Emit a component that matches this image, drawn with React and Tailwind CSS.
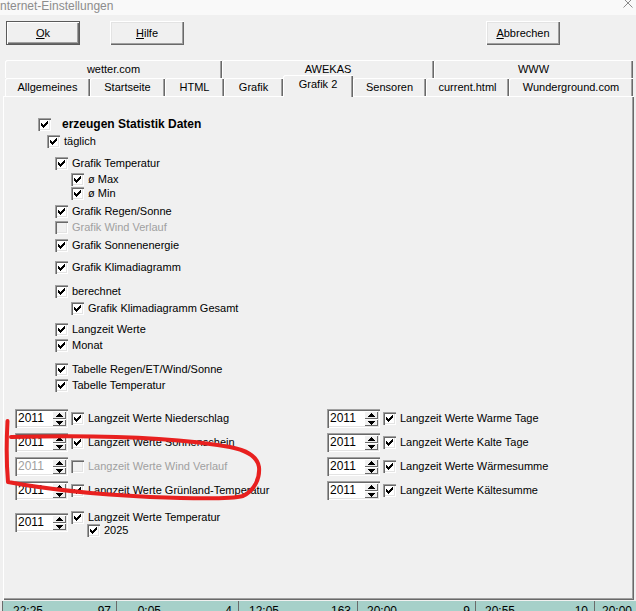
import React from "react";

const SUNKEN =
  "shadow-[inset_1px_1px_0_#a0a0a0,inset_2px_2px_0_#696969,inset_-1px_-1px_0_#ffffff,inset_-2px_-2px_0_#e3e3e3]";

function Check({ checked = true, disabled = false }) {
  return (
    <span
      className={
        "relative block w-[13px] h-[13px] shrink-0 shadow-[inset_1px_1px_0_#a0a0a0,inset_2px_2px_0_#696969,inset_-1px_-1px_0_#ffffff,inset_-2px_-2px_0_#e3e3e3] " +
        (disabled ? "bg-[#f0f0f0]" : "bg-white")
      }
    >
      {checked && (
        <svg
          className="absolute left-[3px] top-[3px]"
          width="7"
          height="7"
          viewBox="0 0 7 7"
          shapeRendering="crispEdges"
        >
          <path
            fill="#000"
            d="M6 0h1v1h-1z M5 1h2v1h-2z M0 2h1v1h-1z M4 2h3v1h-3z M0 3h2v1h-2z M3 3h3v1h-3z M0 4h5v1h-5z M1 5h3v1h-3z M2 6h1v1h-1z"
          />
        </svg>
      )}
    </span>
  );
}

function Row({ ml, mt, children, disabled = false, checked = true, bold = false }) {
  return (
    <div className={"flex items-center h-[13px] " + ml + " " + mt}>
      <Check checked={checked} disabled={disabled} />
      <span
        className={
          "whitespace-nowrap leading-[13px] " +
          (bold ? "ml-[11px] font-bold text-[12px]" : "ml-[4px]") +
          (disabled ? " text-[#a0a0a0]" : " text-black")
        }
      >
        {children}
      </span>
    </div>
  );
}

function Arrow({ up }) {
  return (
    <svg width="7" height="4" viewBox="0 0 7 4" shapeRendering="crispEdges">
      {up ? (
        <path fill="#000" d="M3 0h1v1h-1z M2 1h3v1h-3z M1 2h5v1h-5z M0 3h7v1h-7z" />
      ) : (
        <path fill="#000" d="M0 0h7v1h-7z M1 1h5v1h-5z M2 2h3v1h-3z M3 3h1v1h-1z" />
      )}
    </svg>
  );
}

function Spin({ disabled = false }) {
  return (
    <div className={"w-[53px] h-[19px] shrink-0 flex bg-white p-[2px] " + SUNKEN}>
      <span
        className={
          "flex-1 leading-[15px] pl-[1px] text-[12px] " +
          (disabled ? "text-[#a0a0a0]" : "text-black")
        }
      >
        2011
      </span>
      <div className="w-[14px] h-[15px] flex flex-col">
        <div className="h-[8px] flex items-center justify-center bg-[#f0f0f0] shadow-[inset_1px_1px_0_#ffffff,inset_-1px_-1px_0_#696969]">
          <Arrow up />
        </div>
        <div className="h-[7px] flex items-center justify-center bg-[#f0f0f0] shadow-[inset_1px_1px_0_#ffffff,inset_-1px_-1px_0_#696969]">
          <Arrow />
        </div>
      </div>
    </div>
  );
}

function SpinRow({ children, disabled = false }) {
  return (
    <div className="flex items-center h-[19px]">
      <Spin disabled={disabled} />
      <div className="ml-[3px]">
        <Row ml="" mt="" disabled={disabled} checked={!disabled}>
          {children}
        </Row>
      </div>
    </div>
  );
}

const TAB =
  "flex items-center justify-center bg-[#f0f0f0] rounded-tl-[2px] shadow-[inset_1px_1px_0_#ffffff,inset_-1px_0_0_#696969,inset_-2px_0_0_#a0a0a0] whitespace-nowrap";

export default function App() {
  return (
    <div className="relative w-[636px] h-[611px] overflow-hidden bg-[#f0f0f0] text-black text-[11px] font-['Liberation_Sans',Arial,sans-serif]">
      {/* title bar */}
      <div className="h-[15px] bg-[#f9f9f9] flex items-start justify-between overflow-hidden">
        <span className="text-[12px] leading-[12px] text-[#8c8c8c] whitespace-nowrap">
          nternet-Einstellungen
        </span>
        <svg className="mr-[3px] -mt-[2px]" width="10" height="10" viewBox="0 0 10 10">
          <path d="M0.5 0.5 L9.5 9.5 M9.5 0.5 L0.5 9.5" stroke="#8a8a8a" strokeWidth="1" />
        </svg>
      </div>

      {/* buttons */}
      <div className="flex mt-[6px] h-[24px]">
        <div className="ml-[6px] w-[74px] h-[24px] flex items-center justify-center bg-[#f0f0f0] shadow-[inset_0_0_0_1px_#5a5a5a,inset_2px_2px_0_#ffffff,inset_-2px_-2px_0_#696969,inset_-3px_-3px_0_#a0a0a0]">
          <span>
            <span className="underline underline-offset-1">O</span>k
          </span>
        </div>
        <div className="ml-[30px] w-[74px] h-[24px] flex items-center justify-center bg-[#f0f0f0] shadow-[inset_1px_1px_0_#ffffff,inset_-1px_-1px_0_#696969,inset_-2px_-2px_0_#a0a0a0,inset_2px_2px_0_#e3e3e3]">
          <span>
            <span className="underline underline-offset-1">H</span>ilfe
          </span>
        </div>
        <div className="ml-[302px] w-[74px] h-[24px] flex items-center justify-center bg-[#f0f0f0] shadow-[inset_1px_1px_0_#ffffff,inset_-1px_-1px_0_#696969,inset_-2px_-2px_0_#a0a0a0,inset_2px_2px_0_#e3e3e3]">
          <span>
            <span className="underline underline-offset-1">A</span>bbrechen
          </span>
        </div>
      </div>

      {/* tabs row 1 */}
      <div className="flex ml-[5px] mt-[15px] h-[18px]">
        <div className={TAB + " w-[217px] h-[18px]"}>wetter.com</div>
        <div className={TAB + " w-[212px] h-[18px]"}>AWEKAS</div>
        <div className={TAB + " w-[199px] h-[18px]"}>WWW</div>
      </div>

      {/* tabs row 2 */}
      <div className="relative z-10 flex items-start ml-[5px] -mt-[3px] h-[22px] -mb-[1px]">
        <div className={TAB + " mt-[3px] w-[85px] h-[18px]"}>Allgemeines</div>
        <div className={TAB + " mt-[3px] w-[75px] h-[18px]"}>Startseite</div>
        <div className={TAB + " mt-[3px] w-[59px] h-[18px]"}>HTML</div>
        <div className={TAB + " mt-[3px] w-[59px] h-[18px]"}>Grafik</div>
        <div className={TAB + " w-[70px] h-[22px] pb-[3px]"}>Grafik 2</div>
        <div className={TAB + " mt-[3px] w-[73px] h-[18px]"}>Sensoren</div>
        <div className={TAB + " mt-[3px] w-[83px] h-[18px]"}>current.html</div>
        <div className={TAB + " mt-[3px] w-[124px] h-[18px]"}>Wunderground.com</div>
      </div>

      {/* panel */}
      <div className="ml-[3px] w-[631px] h-[504px] pt-[22px] shadow-[inset_1px_1px_0_#ffffff,inset_-1px_-1px_0_#696969,inset_-2px_-2px_0_#a0a0a0]">
        <Row ml="ml-[35px]" mt="" bold>
          erzeugen Statistik Daten
        </Row>
        <Row ml="ml-[44px]" mt="mt-[4px]">täglich</Row>
        <Row ml="ml-[52px]" mt="mt-[9px]">Grafik Temperatur</Row>
        <Row ml="ml-[68px]" mt="mt-[3px]">ø Max</Row>
        <Row ml="ml-[68px]" mt="mt-[1px]">ø Min</Row>
        <Row ml="ml-[52px]" mt="mt-[5px]">Grafik Regen/Sonne</Row>
        <Row ml="ml-[52px]" mt="mt-[3px]" disabled checked={false}>
          Grafik Wind Verlauf
        </Row>
        <Row ml="ml-[52px]" mt="mt-[5px]">Grafik Sonnenenergie</Row>
        <Row ml="ml-[52px]" mt="mt-[9px]">Grafik Klimadiagramm</Row>
        <Row ml="ml-[52px]" mt="mt-[11px]">berechnet</Row>
        <Row ml="ml-[68px]" mt="mt-[4px]">Grafik Klimadiagramm Gesamt</Row>
        <Row ml="ml-[52px]" mt="mt-[8px]">Langzeit Werte</Row>
        <Row ml="ml-[52px]" mt="mt-[3px]">Monat</Row>
        <Row ml="ml-[52px]" mt="mt-[11px]">Tabelle Regen/ET/Wind/Sonne</Row>
        <Row ml="ml-[52px]" mt="mt-[3px]">Tabelle Temperatur</Row>

        <div className="flex mt-[17px] ml-[12px]">
          <div className="w-[312px] flex flex-col gap-[5px]">
            <SpinRow>Langzeit Werte Niederschlag</SpinRow>
            <SpinRow>Langzeit Werte Sonnenschein</SpinRow>
            <SpinRow disabled>Langzeit Werte Wind Verlauf</SpinRow>
            <SpinRow>Langzeit Werte Grünland-Temperatur</SpinRow>
            <div className="flex items-start mt-[6px]">
              <div className="mt-[2px]">
                <Spin />
              </div>
              <div className="ml-[3px] flex flex-col">
                <Row ml="" mt="">Langzeit Werte Temperatur</Row>
                <Row ml="ml-[16px]" mt="">2025</Row>
              </div>
            </div>
          </div>
          <div className="flex flex-col gap-[5px]">
            <SpinRow>Langzeit Werte Warme Tage</SpinRow>
            <SpinRow>Langzeit Werte Kalte Tage</SpinRow>
            <SpinRow>Langzeit Werte Wärmesumme</SpinRow>
            <SpinRow>Langzeit Werte Kältesumme</SpinRow>
          </div>
        </div>
      </div>

      {/* bottom strip */}
      <div className="mt-[1px] h-[10px] flex bg-[#a6d0c9] overflow-hidden leading-[13px] pt-[4px] text-[12px]">
        <div className="w-[2px] bg-[#e6e6e6] shrink-0 -mt-[4px]" />
        <div className="w-[1px] bg-[#6a6a6a] shrink-0 -mt-[4px]" />
        <div className="w-[113px] flex shrink-0">
          <span className="w-[40px] text-right">22:25</span>
          <span className="flex-1 text-right pr-[5px]">97</span>
        </div>
        <div className="w-[1px] bg-[#6a6a6a] shrink-0 -mt-[4px]" />
        <div className="w-[121px] flex shrink-0">
          <span className="w-[44px] text-right">0:05</span>
          <span className="flex-1 text-right pr-[6px]">4</span>
        </div>
        <div className="w-[1px] bg-[#6a6a6a] shrink-0 -mt-[4px]" />
        <div className="w-[118px] flex shrink-0">
          <span className="w-[40px] text-right">12:05</span>
          <span className="flex-1 text-right pr-[6px]">163</span>
        </div>
        <div className="w-[1px] bg-[#6a6a6a] shrink-0 -mt-[4px]" />
        <div className="w-[117px] flex shrink-0">
          <span className="w-[39px] text-right">20:00</span>
          <span className="flex-1 text-right pr-[5px]">9</span>
        </div>
        <div className="w-[1px] bg-[#6a6a6a] shrink-0 -mt-[4px]" />
        <div className="w-[118px] flex shrink-0">
          <span className="w-[39px] text-right">20:55</span>
          <span className="flex-1 text-right pr-[6px]">10</span>
        </div>
        <div className="w-[1px] bg-[#6a6a6a] shrink-0 -mt-[4px]" />
        <div className="flex-1 flex">
          <span className="w-[37px] text-right">20:00</span>
        </div>
      </div>

      {/* red hand-drawn annotation */}
      <svg
        className="absolute left-0 top-0 pointer-events-none"
        width="636"
        height="611"
        viewBox="0 0 636 611"
      >
        <path
          d="M7.5 421 C6.5 440 6.5 465 8 482 C40 488 90 494 150 497 C200 499 232 499 243 496 C255 490 260 478 259 467 C257 455 245 450 230 447 C190 440 120 434 11 437"
          fill="none"
          stroke="#e8201f"
          strokeWidth="4"
          strokeLinecap="round"
          strokeLinejoin="round"
        />
      </svg>
    </div>
  );
}
